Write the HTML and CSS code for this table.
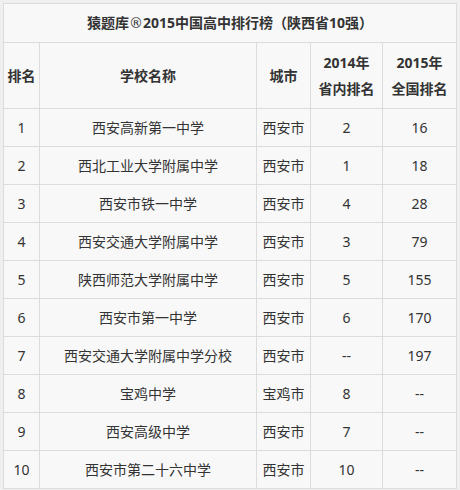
FILE: index.html
```html
<!DOCTYPE html>
<html lang="zh-CN">
<head>
<meta charset="utf-8">
<title>猿题库®2015中国高中排行榜</title>
<link rel="stylesheet" href="styles.css">
</head>
<body>
<table class="rank">
  <colgroup>
    <col class="c-rank">
    <col class="c-name">
    <col class="c-city">
    <col class="c-prov">
    <col class="c-nat">
  </colgroup>
  <thead>
    <tr class="title-row"><th colspan="5">猿题库<span class="reg">®</span>2015中国高中排行榜（陕西省10强）</th></tr>
    <tr class="head-row">
      <th>排名</th>
      <th>学校名称</th>
      <th>城市</th>
      <th>2014年<br>省内排名</th>
      <th>2015年<br>全国排名</th>
    </tr>
  </thead>
  <tbody>
    <tr><td>1</td><td>西安高新第一中学</td><td>西安市</td><td>2</td><td>16</td></tr>
    <tr><td>2</td><td>西北工业大学附属中学</td><td>西安市</td><td>1</td><td>18</td></tr>
    <tr><td>3</td><td>西安市铁一中学</td><td>西安市</td><td>4</td><td>28</td></tr>
    <tr><td>4</td><td>西安交通大学附属中学</td><td>西安市</td><td>3</td><td>79</td></tr>
    <tr><td>5</td><td>陕西师范大学附属中学</td><td>西安市</td><td>5</td><td>155</td></tr>
    <tr><td>6</td><td>西安市第一中学</td><td>西安市</td><td>6</td><td>170</td></tr>
    <tr><td>7</td><td>西安交通大学附属中学分校</td><td>西安市</td><td>--</td><td>197</td></tr>
    <tr><td>8</td><td>宝鸡中学</td><td>宝鸡市</td><td>8</td><td>--</td></tr>
    <tr><td>9</td><td>西安高级中学</td><td>西安市</td><td>7</td><td>--</td></tr>
    <tr><td>10</td><td>西安市第二十六中学</td><td>西安市</td><td>10</td><td>--</td></tr>
  </tbody>
</table>
</body>
</html>
```
FILE: styles.css
```css
html, body {
  margin: 0;
  padding: 0;
  background: #efefef;
}
body {
  padding: 3px;
  font-family: "Noto Sans", "Noto Sans CJK SC", sans-serif;
  font-size: 14px;
  color: #333;
}
.rank {
  border-collapse: collapse;
  table-layout: fixed;
  width: 453px;
  background: #f8f8f8;
  border: 1px solid #dcdcdc;
}
.c-rank { width: 36px; }
.c-name { width: 217px; }
.c-city { width: 54px; }
.c-prov { width: 72px; }
.c-nat { width: 74px; }
.rank th, .rank td {
  border: 1px solid #dcdcdc;
  text-align: center;
  padding: 6px 0;
  line-height: 25px;
  white-space: nowrap;
}
.rank th {
  font-weight: bold;
}
.reg {
  font-family: "DejaVu Sans", sans-serif;
  font-weight: normal;
  font-size: 14px;
}
.head-row th {
  line-height: 26px;
  padding: 7px 0 6px;
}
.rank td {
  font-weight: normal;
}
```
